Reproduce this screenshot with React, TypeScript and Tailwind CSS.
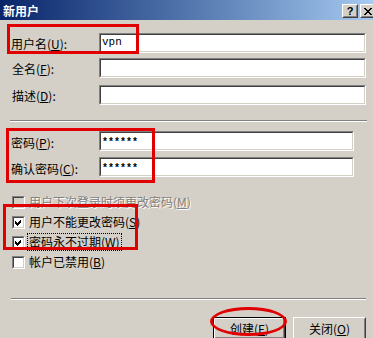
import React from 'react'

type FieldProps = {
  className?: string
  value?: string
  password?: boolean
}

const Field = ({ className = '', value, password }: FieldProps) => (
  <div className={`h-[20px] border border-t-[#808080] border-l-[#808080] border-b-white border-r-white ${className}`}>
    <div className="flex h-full items-center border border-t-[#404040] border-l-[#404040] border-b-[#D4D0C8] border-r-[#D4D0C8] bg-white pl-[1px]">
      {value && (
        <span
          className={
            password
              ? "font-['Liberation_Mono',monospace] text-[10px] font-bold leading-none pt-[3px]"
              : "font-['Liberation_Mono',monospace] text-[11px] leading-none pb-[1px]"
          }
        >
          {value}
        </span>
      )}
    </div>
  </div>
)

const Label = ({ text, hotkey }: { text: string; hotkey: string }) => (
  <span className="whitespace-nowrap">
    {text}(<span className="underline">{hotkey}</span>):
  </span>
)

const CheckBox = ({ checked, disabled }: { checked?: boolean; disabled?: boolean }) => (
  <div className="h-[13px] w-[13px] shrink-0 border border-t-[#808080] border-l-[#808080] border-b-white border-r-white">
    <div
      className={`h-full w-full border border-t-[#404040] border-l-[#404040] border-b-[#D4D0C8] border-r-[#D4D0C8] ${
        disabled ? 'bg-[#D4D0C8]' : 'bg-white'
      }`}
    >
      {checked && (
        <svg viewBox="0 0 9 9" width="9" height="9" shapeRendering="crispEdges">
          <path d="M1 3 L3 5 L7 1 L7 4 L3 8 L1 6 Z" fill="#000" />
        </svg>
      )}
    </div>
  </div>
)

const Button = ({ label, hotkey, isDefault }: { label: string; hotkey: string; isDefault?: boolean }) => (
  <div className={`h-[23px] w-[73px] ${isDefault ? 'border border-black' : ''}`}>
    <div className="h-full border border-t-white border-l-white border-b-[#404040] border-r-[#404040]">
      <div className="flex h-full items-center justify-center border border-t-[#D4D0C8] border-l-[#D4D0C8] border-b-[#808080] border-r-[#808080]">
        <span>
          {label}(<span className="underline">{hotkey}</span>)
        </span>
      </div>
    </div>
  </div>
)

const CaptionButton = ({ children }: { children: React.ReactNode }) => (
  <div className="h-[14px] w-[16px] border border-t-white border-l-white border-b-[#404040] border-r-[#404040] bg-[#D4D0C8]">
    <div className="flex h-full items-center justify-center border border-t-[#D4D0C8] border-l-[#D4D0C8] border-b-[#808080] border-r-[#808080]">
      {children}
    </div>
  </div>
)

const Separator = ({ className = '' }: { className?: string }) => (
  <div className={`h-[2px] border-t border-t-[#808080] border-b border-b-white ${className}`} />
)

export default function App() {
  return (
    <div className="relative h-[338px] w-[373px] overflow-hidden bg-[#D4D0C8] font-['Noto_Sans_CJK_SC','Noto_Sans',sans-serif] text-[12px] leading-[14px] text-black">
      {/* caption */}
      <div className="flex h-[20px] items-start justify-between bg-linear-to-r from-[#0A246A] to-[#A6CAF0] pl-[3px]">
        <span className="mt-[4px] font-bold text-white">新用户</span>
        <div className="mr-[-3px] mt-[4px] flex gap-[2px]">
          <CaptionButton>
            <span className="font-['Liberation_Sans',sans-serif] text-[11px] font-bold leading-none">?</span>
          </CaptionButton>
          <CaptionButton>
            <svg viewBox="0 0 8 7" width="8" height="7" shapeRendering="crispEdges">
              <path d="M0.5 0 L4 3.2 L7.5 0 M0.5 7 L4 3.8 L7.5 7" stroke="#000" strokeWidth="1.6" fill="none" />
            </svg>
          </CaptionButton>
        </div>
      </div>

      {/* name fields */}
      <div className="mt-[13px] flex h-[20px] items-center">
        <div className="w-[99px] pl-[11px] pt-[2px]">
          <Label text="用户名" hotkey="U" />
        </div>
        <Field className="w-[267px]" value="vpn" />
      </div>
      <div className="mt-[5px] flex h-[20px] items-center">
        <div className="w-[99px] pl-[12px] pt-[2px]">
          <Label text="全名" hotkey="F" />
        </div>
        <Field className="w-[267px]" />
      </div>
      <div className="mt-[7px] flex h-[20px] items-center">
        <div className="w-[99px] pl-[12px] pt-[2px]">
          <Label text="描述" hotkey="D" />
        </div>
        <Field className="w-[267px]" />
      </div>

      <Separator className="ml-[10px] mt-[15px] w-[357px]" />

      {/* password fields */}
      <div className="mt-[9px] flex h-[20px] items-center">
        <div className="w-[99px] pl-[11px] pt-[4px]">
          <Label text="密码" hotkey="P" />
        </div>
        <Field className="w-[255px]" value="******" password />
      </div>
      <div className="mt-[6px] flex h-[20px] items-center">
        <div className="w-[99px] pl-[11px] pt-[4px]">
          <Label text="确认密码" hotkey="C" />
        </div>
        <Field className="w-[255px]" value="******" password />
      </div>

      {/* options */}
      <div className="mt-[15px] flex flex-col">
        <div className="flex h-[20px] items-center pl-[12px]">
          <CheckBox disabled />
          <span className="ml-[4px] text-[#808080] [text-shadow:1px_1px_0_#ffffff]">
            用户下次登录时须更改密码(<span className="underline">M</span>)
          </span>
        </div>
        <div className="flex h-[20px] items-center pl-[12px]">
          <CheckBox checked />
          <span className="ml-[4px]">
            用户不能更改密码(<span className="underline">S</span>)
          </span>
        </div>
        <div className="flex h-[20px] items-center pl-[12px]">
          <CheckBox checked />
          <span className="ml-[2px] border border-dotted border-black px-[1px] py-[1px]">
            密码永不过期(<span className="underline">W</span>)
          </span>
        </div>
        <div className="flex h-[20px] items-center pl-[12px]">
          <CheckBox />
          <span className="ml-[4px]">
            帐户已禁用(<span className="underline">B</span>)
          </span>
        </div>
      </div>

      <Separator className="ml-[11px] mt-[26px] w-[355px]" />

      <div className="mt-[17px] flex justify-end gap-[7px] pr-[7px]">
        <Button label="创建" hotkey="E" isDefault />
        <Button label="关闭" hotkey="O" />
      </div>

      {/* red annotations drawn over the dialog */}
      <div className="absolute left-[7px] top-[24px] h-[30px] w-[132px] border-[3px] border-[#E00000]" />
      <div className="absolute left-[6px] top-[128px] h-[55px] w-[149px] border-[3px] border-[#E00000]" />
      <div className="absolute left-[3px] top-[204px] h-[46px] w-[135px] border-[3px] border-[#E00000]" />
      <div className="absolute left-[210px] top-[307px] h-[29px] w-[77px] rounded-[50%] border-[3px] border-[#E00000]" />
    </div>
  )
}
